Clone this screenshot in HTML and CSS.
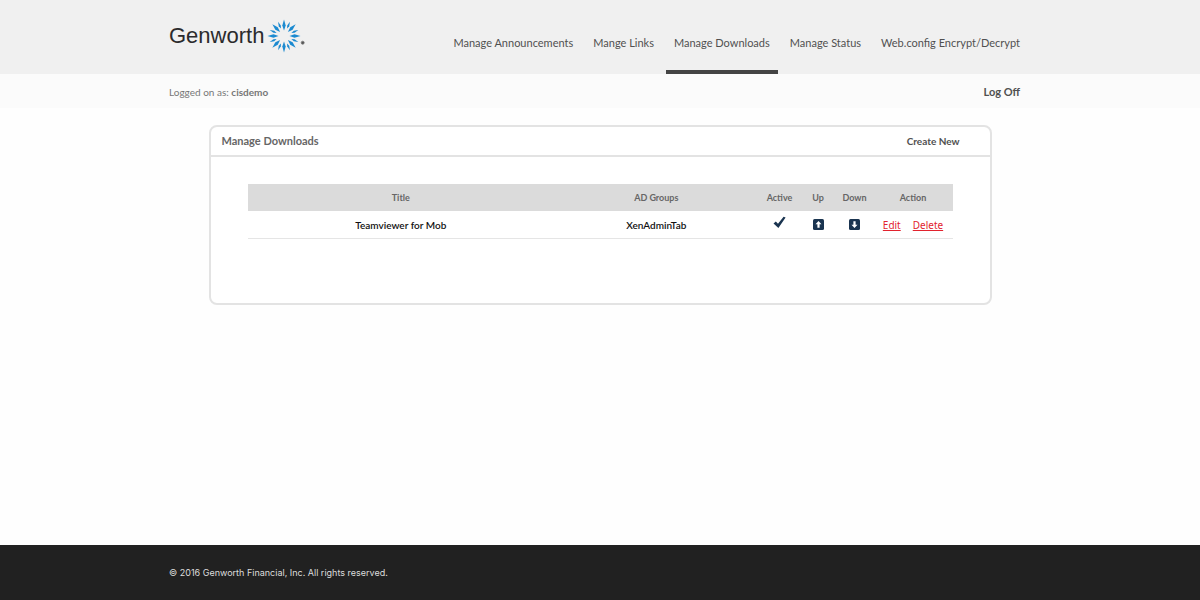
FILE: index.html
```
<!DOCTYPE html>
<html lang="en">
<head>
<meta charset="utf-8">
<meta name="viewport" content="width=device-width, initial-scale=1">
<title>Manage Downloads</title>
<link rel="stylesheet" href="styles.css">
</head>
<body>
<header class="site-header">
  <div class="container header-inner">
    <a class="logo" href="#" aria-label="Genworth home">
      <span class="logo-name">Genworth</span>
      <svg class="logo-burst" width="40" height="34" viewBox="-17 -17 40 34" aria-hidden="true">
        <defs>
          <path id="long" d="M0-16.5 1.7-10.5 0-5.5-1.7-10.5Z"/>
          <path id="short" d="M0-15.5 1.1-11 0-8-1.1-11Z"/>
        </defs>
        <g fill="#1b8ad0">
          <use href="#long"/><use href="#long" transform="rotate(45)"/><use href="#long" transform="rotate(90)"/><use href="#long" transform="rotate(135)"/>
          <use href="#long" transform="rotate(180)"/><use href="#long" transform="rotate(225)"/><use href="#long" transform="rotate(270)"/><use href="#long" transform="rotate(315)"/>
          <use href="#short" transform="rotate(22.5)"/><use href="#short" transform="rotate(67.5)"/><use href="#short" transform="rotate(112.5)"/><use href="#short" transform="rotate(157.5)"/>
          <use href="#short" transform="rotate(202.5)"/><use href="#short" transform="rotate(247.5)"/><use href="#short" transform="rotate(292.5)"/><use href="#short" transform="rotate(337.5)"/>
        </g>
        <circle cx="18.7" cy="6.7" r="1.5" fill="#555" stroke="#777" stroke-width=".8"/>
      </svg>
    </a>
    <nav class="main-nav" aria-label="Main">
      <a class="nav-link" href="#">Manage Announcements</a>
      <a class="nav-link" href="#">Mange Links</a>
      <a class="nav-link nav-link-active" href="#" aria-current="page">Manage Downloads</a>
      <a class="nav-link" href="#">Manage Status</a>
      <a class="nav-link" href="#">Web.config Encrypt/Decrypt</a>
    </nav>
  </div>
</header>
<div class="user-bar">
  <div class="container user-bar-inner">
    <p class="user">Logged on as: <b>cisdemo</b></p>
    <a class="log-off" href="#">Log Off</a>
  </div>
</div>
<main class="content">
  <section class="card">
    <div class="card-head">
      <h1 class="card-title">Manage Downloads</h1>
      <a class="create" href="#">Create New</a>
    </div>
    <div class="card-body">
      <table class="downloads">
        <colgroup>
          <col><col class="col-groups"><col class="col-active"><col class="col-up"><col class="col-down"><col class="col-action">
        </colgroup>
        <thead>
          <tr><th>Title</th><th>AD Groups</th><th>Active</th><th>Up</th><th>Down</th><th>Action</th></tr>
        </thead>
        <tbody>
          <tr>
            <td>Teamviewer for Mob</td>
            <td>XenAdminTab</td>
            <td><svg class="icon check" width="13" height="13" viewBox="0 0 13 13" role="img" aria-label="Active"><path d="M.5 7.4 2.8 5.4 5 7.8 10.6.8 12.6 1.6 5.4 12Z" fill="#1a3450"/></svg></td>
            <td><button class="move" type="button" aria-label="Move up"><svg class="icon" width="11" height="11" viewBox="0 0 11 11" aria-hidden="true"><rect width="11" height="11" rx="1.5" fill="#1a3450"/><path d="M5.5 2 8.5 5.2H6.6V8.7H4.4V5.2H2.5Z" fill="#fff"/></svg></button></td>
            <td><button class="move" type="button" aria-label="Move down"><svg class="icon" width="11" height="11" viewBox="0 0 11 11" aria-hidden="true"><rect width="11" height="11" rx="1.5" fill="#1a3450"/><path d="M5.5 9 8.5 5.8H6.6V2.3H4.4V5.8H2.5Z" fill="#fff"/></svg></button></td>
            <td><div class="actions"><a href="#">Edit</a><a href="#">Delete</a></div></td>
          </tr>
        </tbody>
      </table>
    </div>
  </section>
</main>
<footer class="site-footer">
  <div class="container">© 2016 Genworth Financial, Inc. All rights reserved.</div>
</footer>
</body>
</html>
```
FILE: styles.css
```
* { box-sizing: border-box; }

body {
  display: flex;
  flex-direction: column;
  min-height: 100vh;
  margin: 0;
  background: #fefefe;
  color: #505050;
  font: 11px/16px Lato, "Noto Sans", sans-serif;
}

a { color: inherit; text-decoration: none; }

.container {
  width: 100%;
  max-width: 862px;
  margin: 0 auto;
}

.site-header { background: #f0f0f0; }

.header-inner {
  display: flex;
  justify-content: space-between;
  padding-right: 3px;
}

.logo {
  display: flex;
  align-items: center;
  gap: 3px;
  height: 72px;
  color: #2b2b2d;
}

.logo-name { font: 22px/28px "Liberation Sans", Arial, sans-serif; }

.main-nav { display: flex; gap: 4px; }

.nav-link {
  padding: 35px 8px 19px;
  border-bottom: 4px solid transparent;
  white-space: nowrap;
}

.nav-link-active { border-color: #444; }

.user-bar { background: #fbfbfb; }

.user-bar-inner {
  display: flex;
  align-items: center;
  justify-content: space-between;
  padding: 10px 11px 8px 0;
}

.user { margin: 0; color: #777; font-size: 10px; }

.log-off { font-weight: 700; }

.content { flex: 1; padding: 17px 20px 24px; }

.card {
  max-width: 783px;
  margin: 0 auto;
  border: 2px solid #e3e3e3;
  border-radius: 8px;
  background: #fff;
}

.card-head {
  display: flex;
  align-items: center;
  justify-content: space-between;
  padding: 6px 30px 6px 11px;
  border-bottom: 2px solid #e3e3e3;
}

.card-title { margin: 0; font-size: 11px; line-height: 16px; font-weight: 700; color: #666; }

.create { font-size: 10px; font-weight: 700; }

.card-body { padding: 27px 37px 64px; }

.downloads {
  width: 100%;
  table-layout: fixed;
  border-collapse: collapse;
  color: #111;
  font-size: 10px;
  font-weight: 600;
  text-align: center;
}

.downloads th {
  height: 27px;
  padding: 0;
  background: #dbdbdb;
  color: #666;
  font-size: 9px;
  font-weight: 700;
}

.downloads td {
  height: 27px;
  padding: 2px 0 0;
  border-bottom: 1px solid #e5e5e5;
}

.col-groups { width: 29%; }
.col-active { width: 42px; }
.col-up { width: 35px; }
.col-down { width: 38px; }
.col-action { width: 79px; }

.icon { display: block; margin: 0 auto; }

.check { margin-bottom: 5px; }

.move {
  display: block;
  margin: 0 auto;
  padding: 0 0 2px;
  border: 0;
  background: none;
  cursor: pointer;
}

.actions {
  display: flex;
  justify-content: center;
  gap: 12px;
  color: #e2232e;
  font-family: "Noto Sans", sans-serif;
  font-weight: 400;
}

.actions a { text-decoration: underline; }

.site-footer {
  padding: 20px 0 19px;
  background: #212121;
  color: #ddd;
  font: 9px/16px Inter, Arial, sans-serif;
}
```
